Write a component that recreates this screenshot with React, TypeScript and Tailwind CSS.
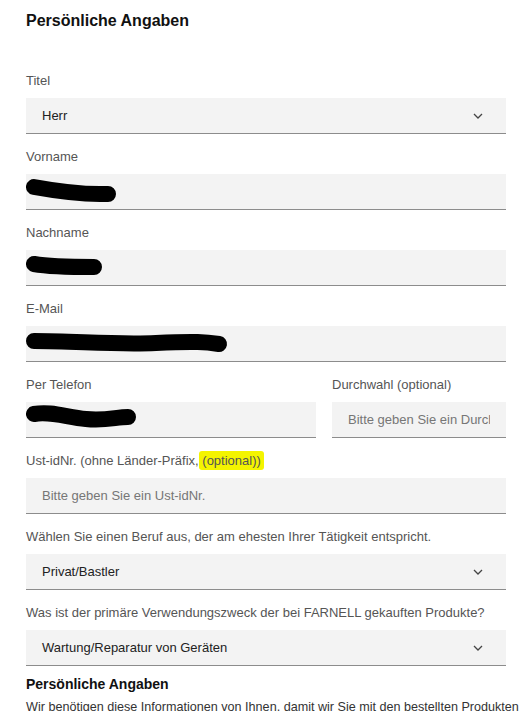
import React from 'react';

const Chevron: React.FC = () => (
  <svg width="10" height="6" viewBox="0 0 10 6" className="shrink-0">
    <polyline points="1,1 5,5 9,1" fill="none" stroke="#444" strokeWidth="1.3" />
  </svg>
);

const Scribble: React.FC<{ width: number; d: string }> = ({ width, d }) => (
  <svg width={width} height="35" viewBox={`0 0 ${width} 35`} className="shrink-0">
    <path d={d} fill="none" stroke="#000" strokeWidth="16" strokeLinecap="round" strokeLinejoin="round" />
  </svg>
);

const Label: React.FC<{ children: React.ReactNode }> = ({ children }) => (
  <div className="text-[13px] leading-[16px] text-[#555] mb-[9px] whitespace-nowrap">{children}</div>
);

const Field: React.FC<{ children?: React.ReactNode; className?: string }> = ({ children, className }) => (
  <div className={`h-[36px] bg-[#f3f3f3] border-b border-[#8c8c8c] flex items-center overflow-hidden ${className ?? ''}`}>
    {children}
  </div>
);

const Select: React.FC<{ value: string }> = ({ value }) => (
  <Field className="pl-4 pr-[23px] justify-between">
    <span className="text-[13px] text-[#222]">{value}</span>
    <Chevron />
  </Field>
);

const Placeholder: React.FC<{ text: string }> = ({ text }) => (
  <Field className="px-4">
    <input
      readOnly
      placeholder={text}
      className="w-full bg-transparent outline-none text-[13px] placeholder:text-[#767676]"
    />
  </Field>
);

const App: React.FC = () => {
  return (
    <div className="w-[521px] h-[711px] overflow-hidden bg-white font-['Liberation_Sans',Arial,sans-serif]">
      <div className="pl-[26px] pr-[15px]">
        <h2 className="pt-[11px] text-[16px] leading-[20px] font-bold text-[#111] mb-[42px]">Persönliche Angaben</h2>

        <div className="flex flex-col gap-[15px]">
          <div>
            <Label>Titel</Label>
            <Select value="Herr" />
          </div>

          <div>
            <Label>Vorname</Label>
            <Field>
              <Scribble width={110} d="M 8 13 C 30 17, 55 20, 74 20 L 82 20" />
            </Field>
          </div>

          <div>
            <Label>Nachname</Label>
            <Field>
              <Scribble width={80} d="M 8 14 C 25 17, 45 17, 68 17" />
            </Field>
          </div>

          <div>
            <Label>E-Mail</Label>
            <Field>
              <Scribble width={205} d="M 8 15 C 50 15, 90 19, 130 17 S 180 16, 193 18" />
            </Field>
          </div>

          <div className="flex gap-4">
            <div className="w-[290px]">
              <Label>Per Telefon</Label>
              <Field>
                <Scribble width={114} d="M 8 12 C 25 9, 40 15, 60 17 S 90 15, 102 15" />
              </Field>
            </div>
            <div className="flex-1">
              <Label>Durchwahl (optional)</Label>
              <Placeholder text="Bitte geben Sie ein Durchwahl" />
            </div>
          </div>

          <div>
            <Label>
              Ust-idNr. (ohne Länder-Präfix,{' '}
              <span className="bg-[#f4f400] rounded-[3px] px-[3px] py-[2px] -ml-[3px]">(optional))</span>
            </Label>
            <Placeholder text="Bitte geben Sie ein Ust-idNr." />
          </div>

          <div>
            <Label>Wählen Sie einen Beruf aus, der am ehesten Ihrer Tätigkeit entspricht.</Label>
            <Select value="Privat/Bastler" />
          </div>

          <div>
            <Label>Was ist der primäre Verwendungszweck der bei FARNELL gekauften Produkte?</Label>
            <Select value="Wartung/Reparatur von Geräten" />
          </div>
        </div>

        <h3 className="mt-[9px] text-[14px] leading-[18px] font-bold text-[#111]">Persönliche Angaben</h3>
        <p className="mt-[5px] w-[495px] text-[12.6px] leading-[18px] text-[#333]">
          Wir benötigen diese Informationen von Ihnen, damit wir Sie mit den bestellten Produkten beliefern können.
        </p>
      </div>
    </div>
  );
};

export default App;
